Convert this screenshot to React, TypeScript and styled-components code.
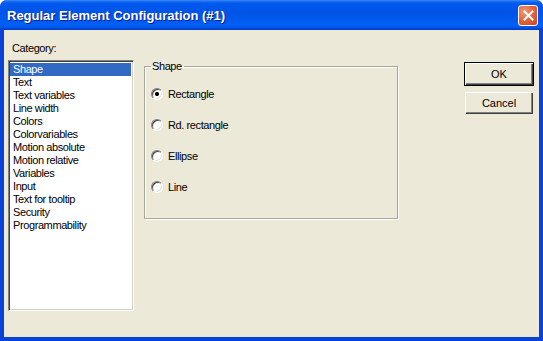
import React from "react";
import styled, { createGlobalStyle } from "styled-components";

const GlobalStyle = createGlobalStyle`
  html, body { margin: 0; padding: 0; background: #ffffff; }
  body { font-family: "Liberation Sans", Arial, sans-serif; }
`;

const Window = styled.div`
  width: 543px;
  height: 341px;
  display: flex;
  flex-direction: column;
  border-radius: 7px 7px 0 0;
  overflow: hidden;
  background: #0842d8;
  box-sizing: border-box;
`;

const TitleBar = styled.div`
  height: 30px;
  flex: none;
  display: flex;
  align-items: center;
  padding: 1px 5px 0 7px;
  box-sizing: border-box;
  background: linear-gradient(
    180deg,
    #3c8cf8 0%,
    #1266f0 6%,
    #0058ee 12%,
    #0054e8 45%,
    #0060f6 85%,
    #0054e3 92%,
    #0038c8 100%
  );
`;

const Title = styled.div`
  flex: 1;
  color: #ffffff;
  font-family: "Liberation Sans", Arial, sans-serif;
  font-weight: bold;
  font-size: 13px;
  text-shadow: 1px 1px 0 #0a1a8a;
  white-space: nowrap;
`;

const CloseButton = styled.div`
  width: 20px;
  height: 21px;
  box-sizing: border-box;
  border: 1px solid #ffffff;
  border-radius: 3px;
  background: radial-gradient(circle at 30% 30%, #f29a7a 0%, #e5663e 45%, #cc4420 100%);
  display: flex;
  align-items: center;
  justify-content: center;
  margin-bottom: 1px;
`;

const Body = styled.div`
  flex: 1;
  margin: 0 4px 4px 4px;
  background: #ece9d8;
  display: flex;
  align-items: flex-start;
  padding: 0 5px 0 4px;
  font-size: 11px;
  letter-spacing: -0.4px;
  color: #000000;
`;

const LeftColumn = styled.div`
  width: 126px;
  display: flex;
  flex-direction: column;
`;

const Label = styled.div`
  line-height: 13px;
  padding: 12px 0 0 4px;
  height: 30px;
  box-sizing: border-box;
`;

const ListBox = styled.div`
  height: 251px;
  box-sizing: border-box;
  background: #ffffff;
  border-style: solid;
  border-width: 1px;
  border-color: #808080 #ffffff #ffffff #808080;
  box-shadow: inset 1px 1px 0 #404040, inset -1px -1px 0 #d4d0c8;
  padding: 2px 2px 0 1px;
`;

const ListItem = styled.div<{ $selected?: boolean }>`
  height: 13px;
  line-height: 13px;
  padding-left: 3px;
  background: ${(p) => (p.$selected ? "#316ac5" : "transparent")};
  color: ${(p) => (p.$selected ? "#ffffff" : "#000000")};
  white-space: nowrap;
`;

const Group = styled.fieldset`
  margin: 30px 0 0 10px;
  width: 254px;
  height: 159px;
  box-sizing: border-box;
  border: 1px solid #a7a69a;
  box-shadow: inset 1px 1px 0 #ffffff, 1px 1px 0 #ffffff;
  padding: 5px 6px 0 6px;
  display: flex;
  flex-direction: column;
  min-width: 0;
`;

const Legend = styled.legend`
  padding: 0 2px 0 1px;
  margin-left: 0;
  line-height: 13px;
`;

const RadioRow = styled.label`
  height: 31px;
  display: flex;
  align-items: center;
  gap: 5px;
`;

const RadioCircle = styled.span<{ $checked?: boolean }>`
  width: 12px;
  height: 12px;
  box-sizing: border-box;
  border-radius: 50%;
  border-style: solid;
  border-width: 1px;
  border-color: #808080 #ffffff #ffffff #808080;
  background: ${(p) =>
    p.$checked
      ? "radial-gradient(circle, #000 0 2px, #fff 2.2px)"
      : "#ffffff"};
  box-shadow: inset 1px 1px 0 #404040, inset -1px -1px 0 #e4e2d8;
  flex: none;
`;

const ButtonColumn = styled.div`
  margin: 32px 0 0 auto;
  display: flex;
  flex-direction: column;
  gap: 5px;
`;

const Button = styled.div<{ $default?: boolean }>`
  width: 70px;
  height: 24px;
  box-sizing: border-box;
  display: flex;
  align-items: center;
  justify-content: center;
  background: #ece9d8;
  border: 1px solid ${(p) => (p.$default ? "#000000" : "transparent")};
  box-shadow: inset 1px 1px 0 #ffffff, inset -1px -1px 0 #404040,
    inset -2px -2px 0 #808080;
  letter-spacing: 0;
  font-size: 11px;
`;

const categories = [
  "Shape",
  "Text",
  "Text variables",
  "Line width",
  "Colors",
  "Colorvariables",
  "Motion absolute",
  "Motion relative",
  "Variables",
  "Input",
  "Text for tooltip",
  "Security",
  "Programmability",
];

const shapes = ["Rectangle", "Rd. rectangle", "Ellipse", "Line"];

export default function App() {
  return (
    <>
      <GlobalStyle />
      <Window>
        <TitleBar>
          <Title>Regular Element Configuration (#1)</Title>
          <CloseButton>
            <svg width="11" height="11" viewBox="0 0 11 11">
              <path d="M1.5 1.5 L9.5 9.5 M9.5 1.5 L1.5 9.5" stroke="#ffffff" strokeWidth="2" strokeLinecap="square" />
            </svg>
          </CloseButton>
        </TitleBar>
        <Body>
          <LeftColumn>
            <Label>Category:</Label>
            <ListBox>
              {categories.map((c, i) => (
                <ListItem key={c} $selected={i === 0}>
                  {c}
                </ListItem>
              ))}
            </ListBox>
          </LeftColumn>
          <Group>
            <Legend>Shape</Legend>
            {shapes.map((s, i) => (
              <RadioRow key={s}>
                <RadioCircle $checked={i === 0} />
                {s}
              </RadioRow>
            ))}
          </Group>
          <ButtonColumn>
            <Button $default>OK</Button>
            <Button>Cancel</Button>
          </ButtonColumn>
        </Body>
      </Window>
    </>
  );
}
